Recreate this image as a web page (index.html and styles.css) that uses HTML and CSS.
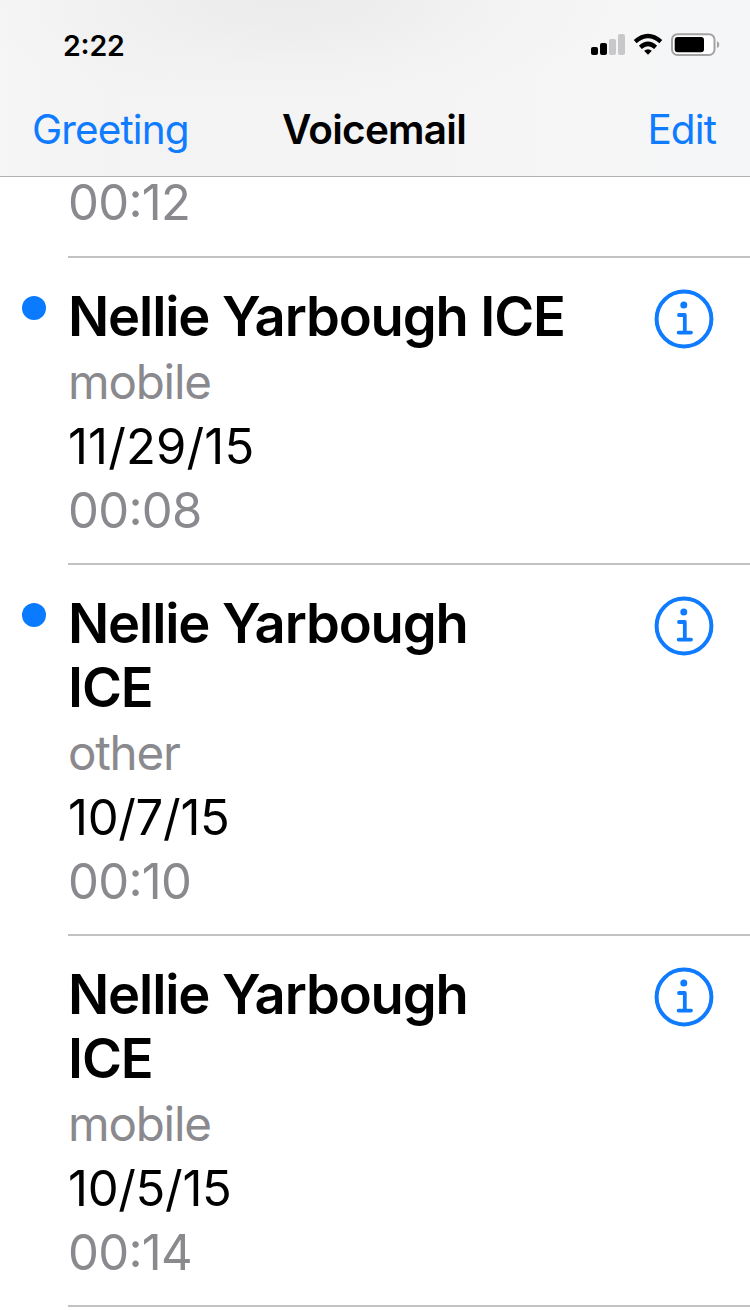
FILE: index.html
```html
<!DOCTYPE html>
<html lang="en">
<head>
<meta charset="utf-8">
<title>Voicemail</title>
<link rel="stylesheet" href="styles.css">
</head>
<body>
<svg width="0" height="0" class="defs">
  <symbol id="info" viewBox="0 0 60 60">
    <circle cx="30" cy="30" r="27.4" fill="none" stroke="currentColor" stroke-width="4"/>
    <circle cx="29.8" cy="15.9" r="3.5" fill="currentColor"/>
    <path d="M25 26H30.8V43.2M24.6 43.6H37" fill="none" stroke="currentColor" stroke-width="3.8" stroke-linecap="round" stroke-linejoin="round"/>
  </symbol>
</svg>
<header class="header">
  <div class="status">
    <span class="clock">2<span class="colon">:</span>22</span>
    <svg class="indicators" width="130" height="24" viewBox="0 0 130 24">
      <rect x="1" y="14" width="7" height="8" rx="2"/>
      <rect x="10" y="10" width="7" height="12" rx="2"/>
      <rect x="19" y="6" width="7" height="16" rx="2" fill="#c8c8ca"/>
      <rect x="28" y="1" width="7" height="21" rx="2" fill="#c8c8ca"/>
      <g fill="none" stroke="#000" stroke-width="4.4">
        <path d="M45.2 8.6Q58 -2.6 70.8 8.6"/>
        <path d="M50.4 14.3Q58 7.5 65.6 14.3"/>
      </g>
      <path d="M54.1 17.7Q58 14.7 61.9 17.7L58 21.8Z"/>
      <rect x="82" y="1.2" width="42.5" height="20.8" rx="5.5" fill="#fff" stroke="#a3a3a5" stroke-width="2"/>
      <rect x="84.7" y="4" width="29.3" height="15.2" rx="3"/>
      <path d="M127 8.2Q129.3 9 129.3 11.6Q129.3 14.2 127 15Z" fill="#a3a3a5"/>
    </svg>
  </div>
  <nav class="nav">
    <a class="action">Greeting</a>
    <h1 class="title">Voicemail</h1>
    <a class="action action-end">Edit</a>
  </nav>
</header>
<main class="list">
  <article class="row row-first">
    <div class="body"><p class="line length">00<span class="colon">:</span>12</p></div>
  </article>
  <article class="row">
    <span class="dot"></span>
    <div class="body">
      <h2 class="name">Nellie Yarbough ICE</h2>
      <p class="line label">mobile</p>
      <p class="line date date-long">11/29/15</p>
      <p class="line length">00<span class="colon">:</span>08</p>
      <svg class="info"><use href="#info"/></svg>
    </div>
  </article>
  <article class="row">
    <span class="dot"></span>
    <div class="body">
      <h2 class="name">Nellie Yarbough<br>ICE</h2>
      <p class="line label">other</p>
      <p class="line date">10/7/15</p>
      <p class="line length">00<span class="colon">:</span>10</p>
      <svg class="info"><use href="#info"/></svg>
    </div>
  </article>
  <article class="row">
    <div class="body">
      <h2 class="name">Nellie Yarbough<br>ICE</h2>
      <p class="line label">mobile</p>
      <p class="line date">10/5/15</p>
      <p class="line length">00<span class="colon">:</span>14</p>
      <svg class="info"><use href="#info"/></svg>
    </div>
  </article>
</main>
</body>
</html>
```

FILE: styles.css
```css
* { box-sizing: border-box; }
body {
  margin: 0;
  height: 1310px;
  overflow: hidden;
  background: #fff;
  color: #000;
  font-family: Inter, "Liberation Sans", sans-serif;
}
.defs { display: block; }
.header {
  position: relative;
  z-index: 1;
  height: 177px;
  border-bottom: 1px solid #b2b2b4;
  background:
    radial-gradient(ellipse 330px 110px at 290px 0, #ebebeb, rgba(240, 240, 240, .6) 60%, rgba(246, 246, 246, 0)),
    linear-gradient(90deg, #f6f6f7 0, #f3f3f3 14%, #f4f4f4 50%, #f6f6f6 75%, #f5f6f8);
}
.status {
  display: flex;
  justify-content: space-between;
  align-items: center;
  height: 90px;
  padding: 0 30px 0 63px;
}
.clock {
  font-size: 28.5px;
  font-weight: 600;
  letter-spacing: -0.2px;
}
.colon { line-height: 0; vertical-align: 0.07em; }
.nav {
  display: grid;
  grid-template-columns: 1fr auto 1fr;
  align-items: center;
  height: 78px;
  padding: 0 34px 0 32px;
}
.action { color: #0f7bff; font-size: 40.5px; letter-spacing: -0.9px; }
.action-end { text-align: right; }
.title { margin: 0; font-size: 40.5px; font-weight: 600; letter-spacing: -0.75px; }
.list { margin-top: -6px; }
.row {
  display: grid;
  grid-template-columns: 68px 1fr;
}
.body {
  grid-column: 2;
  grid-row: 1;
  display: grid;
  grid-template-columns: 1fr 59px;
  padding: 26px 37px 20px 0;
  border-bottom: 2px solid #c2c2c4;
}
.row-first .body { padding-top: 0; padding-bottom: 21px; }
.dot {
  grid-column: 1;
  grid-row: 1;
  width: 24px;
  height: 24px;
  margin: 38px 0 0 22px;
  border-radius: 50%;
  background: #0a7aff;
}
.name {
  grid-column: 1;
  margin: 0 0 2px;
  font-size: 54.3px;
  font-weight: 600;
  line-height: 64px;
  letter-spacing: -1.12px;
  white-space: nowrap;
}
.line {
  grid-column: 1;
  height: 64px;
  margin: 0;
  font-size: 49px;
  line-height: 64px;
}
.label {
  margin-bottom: 1px;
  color: #89898e;
  font-size: 47.5px;
  letter-spacing: -1.2px;
}
.date { font-kerning: none; letter-spacing: -0.3px; }
.date-long { letter-spacing: 0.15px; }
.length { color: #89898e; letter-spacing: -0.7px; }
.info {
  grid-column: 2;
  grid-row: 1;
  width: 60px;
  height: 60px;
  margin-top: 5px;
  color: #0f7bff;
}
```
